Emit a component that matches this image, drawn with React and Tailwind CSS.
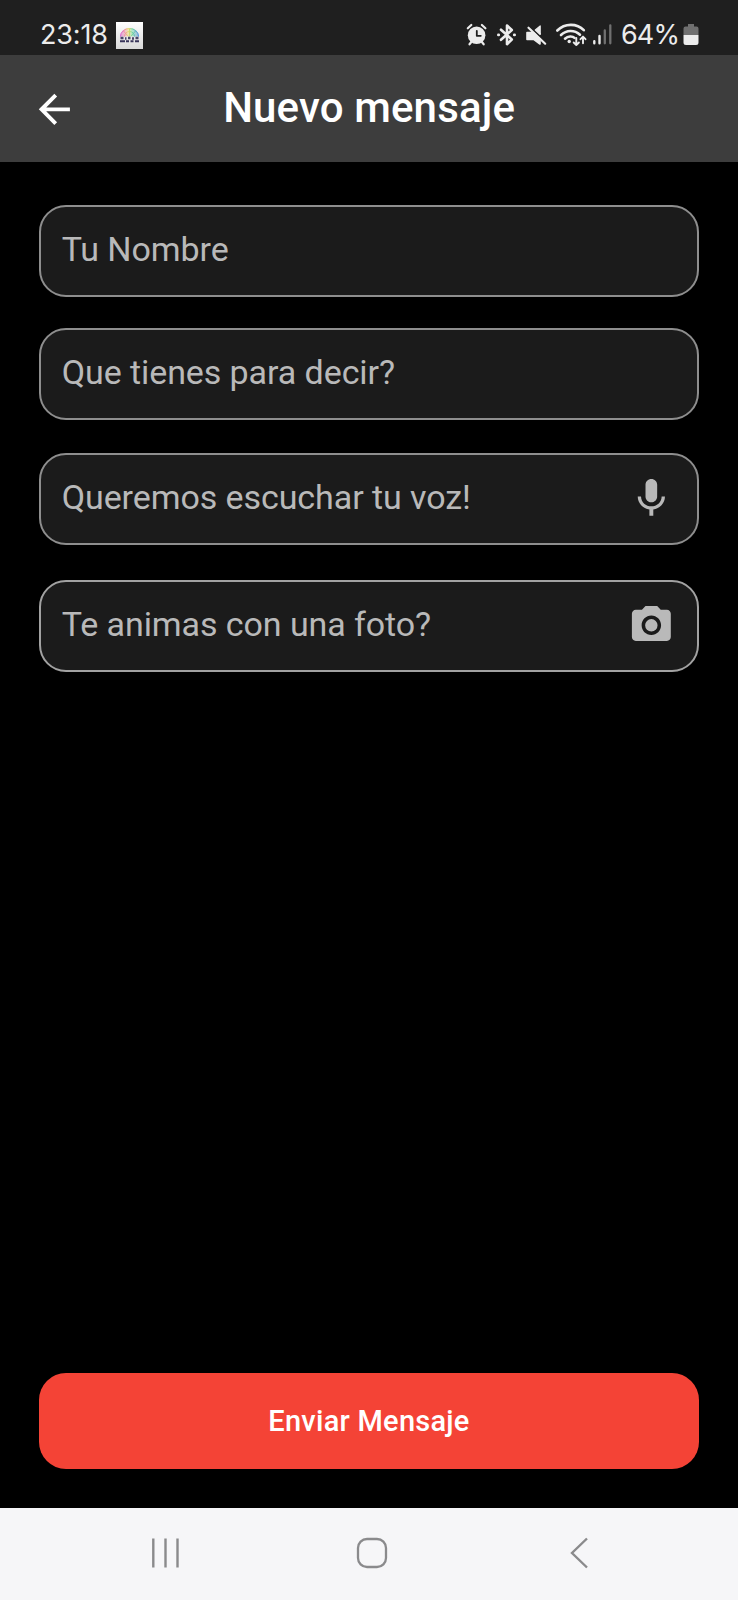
import React from 'react';

const fields = [
  { label: 'Tu Nombre', box: 'mt-[42.5px] border-[#8e8e8e]' },
  { label: 'Que tienes para decir?', box: 'mt-[31px] border-[#8e8e8e]' },
  { label: 'Queremos escuchar tu voz!', box: 'mt-[33px] border-[#8e8e8e]', icon: 'mic' },
  { label: 'Te animas con una foto?', box: 'mt-[35px] border-[#a2a2a2]', icon: 'camera' },
];

const icons = {
  back: 'M20 11H7.83l5.59-5.59L12 4l-8 8 8 8 1.41-1.41L7.83 13H20v-2z',
  mic: 'M12 14c1.66 0 2.99-1.34 2.99-3L15 5c0-1.66-1.34-3-3-3S9 3.34 9 5v6c0 1.66 1.34 3 3 3zm5.3-3c0 3-2.54 5.1-5.3 5.1S6.7 14 6.7 11H5c0 3.41 2.72 6.23 6 6.72V21h2v-3.28c3.28-.48 6-3.3 6-6.72h-1.7z',
  camera: 'M12 8.8a3.2 3.2 0 1 0 0 6.4 3.2 3.2 0 1 0 0-6.4zM9 2L7.17 4H4c-1.1 0-2 .9-2 2v12c0 1.1.9 2 2 2h16c1.1 0 2-.9 2-2V6c0-1.1-.9-2-2-2h-3.17L15 2H9zm3 15c-2.76 0-5-2.24-5-5s2.24-5 5-5 5 2.24 5 5-2.24 5-5 5z',
};

function Icon({ name, className }) {
  return (
    <svg viewBox="0 0 24 24" className={className} fill="currentColor">
      <path d={icons[name]} />
    </svg>
  );
}

function AppBadge() {
  return (
    <svg width="27" height="27" viewBox="0 0 27 27" className="ml-[8px]">
      <defs>
        <linearGradient id="paper" x1="0" y1="0" x2="0" y2="1">
          <stop offset="0" stopColor="#ffffff" />
          <stop offset="1" stopColor="#d9d9d9" />
        </linearGradient>
        <linearGradient id="rainbow" gradientUnits="userSpaceOnUse" x1="4" y1="0" x2="23" y2="0">
          <stop offset="0" stopColor="#d85ad6" />
          <stop offset="0.25" stopColor="#f08fa0" />
          <stop offset="0.45" stopColor="#e9dc6a" />
          <stop offset="0.65" stopColor="#6fd6a0" />
          <stop offset="1" stopColor="#4a86e0" />
        </linearGradient>
      </defs>
      <rect width="27" height="27" fill="url(#paper)" />
      <path d="M4 14.500a9.500 8.500 0 0 1 19 0z" fill="url(#rainbow)" opacity="0.5" />
      <path d="M4.500 14.500a9 8 0 0 1 18 0M8.500 14.500a5 5 0 0 1 10 0M13.500 6.500V14.500M7.500 9l4.500 5M19.500 9l-4.500 5" fill="none" stroke="url(#rainbow)" strokeWidth="1" />
      <path d="M4.500 16h3M9 16.500h1.500M12 16h2.500M16 16.500h2M19.500 16h3" stroke="#4a4468" strokeWidth="2.400" />
      <path d="M4 19.300h5M10 19.300h3M14.500 19.300h3M19 19.300h4" stroke="#38345a" strokeWidth="2" />
    </svg>
  );
}

function StatusIcons() {
  return (
    <svg width="148" height="26" viewBox="466 22 148 26" fill="none" stroke="#ececec" strokeLinecap="round" strokeLinejoin="round">
      {/* alarm */}
      <circle cx="476.600" cy="35.300" r="8.800" fill="#ececec" stroke="none" />
      <path d="M467.800 28.300l3.500-3.300M485.400 28.300l-3.500-3.300M471.300 42l-1.800 2.300M481.900 42l1.800 2.300" strokeWidth="2.200" />
      <path d="M476.800 30.800v5h4" stroke="#1f1f1f" strokeWidth="1.800" />
      {/* bluetooth */}
      <path d="M501 29.700l10.800 9.800-4.800 4.700V25.500l4.800 4.500-10.800 9.800" strokeWidth="2.600" />
      <path d="M498.400 34.900h.3M514.300 34.900h.3" strokeWidth="2.800" />
      {/* muted speaker */}
      <path d="M527 32.500h6.500l6.500 6.800v4.700l-6-4.500h-7z" fill="#ececec" strokeWidth="1.600" />
      <path d="M535.300 30l4.900-4v8.500z" fill="#ececec" strokeWidth="1.200" />
      <path d="M528.500 27.700l16.700 16" strokeWidth="2.200" />
      {/* wifi */}
      <path d="M557.300 30.500c7.500-7.500 19.500-7.500 26.500-.3" strokeWidth="2.600" />
      <path d="M561 35c5.500-5.300 13.500-5.300 19-.3M565 38.700c3-2.800 7.500-2.800 9.500-.8" strokeWidth="2.600" />
      <circle cx="569.200" cy="41.500" r="1.700" fill="#ececec" stroke="none" />
      <path d="M576.300 38v7M573.700 42.500l2.600 2.600 2.600-2.600M583 43.300v-6.500M580.500 39.200l2.500-2.600 2.500 2.600" strokeWidth="1.900" />
      {/* signal */}
      <path d="M594.300 41.300v2M599.500 36v7.300" strokeWidth="2.400" />
      <path d="M604.800 30.500v12.800M610.300 25.300v18" stroke="#707070" strokeWidth="2.300" />
    </svg>
  );
}

function StatusBar() {
  return (
    <div className="h-[55px] bg-[#1f1f1f] flex items-center pt-[15px] pl-[40px] pr-[39px] text-[#ececec] text-[27px] leading-[40px] font-['Inter',sans-serif]">
      <span className="w-[68px] tracking-[-0.150px] whitespace-nowrap">23:18</span>
      <AppBadge />
      <div className="flex-1" />
      <StatusIcons />
      <span className="ml-[7px] w-[57px] tracking-[-0.9px] whitespace-nowrap">64%</span>
      <svg width="16" height="22" viewBox="0 0 16 22" className="ml-[5px]">
        <path d="M5 0h6v2.500h2.500a2 2 0 0 1 2 2V11H.5V4.500a2 2 0 0 1 2-2H5z" fill="#707070" />
        <path d="M.5 11h15v7.500a2.500 2.500 0 0 1-2.500 2.500H3a2.500 2.500 0 0 1-2.500-2.500z" fill="#ececec" />
      </svg>
    </div>
  );
}

function Field({ label, box, icon }) {
  return (
    <div className={`${box} h-[92px] shrink-0 flex items-center justify-between rounded-[27px] border-2 bg-[#1b1b1b] pl-[21px] pr-[23px] text-[#b9b9b9]`}>
      <span className="pb-[4px] text-[34px] leading-[40px] tracking-[-0.080px]">{label}</span>
      {icon && <Icon name={icon} className="size-[46.700px]" />}
    </div>
  );
}

function NavBar() {
  return (
    <div className="h-[92.500px] shrink-0 bg-[#f6f6f8] flex items-center pl-[151px] pb-[2px] text-[#8a8a8c]">
      <svg width="30" height="32" viewBox="0 0 30 32" fill="none" stroke="currentColor" strokeWidth="2.400">
        <path d="M2.300 1.500v29M14.500 1.500v29M26.500 1.500v29" />
      </svg>
      <svg width="32" height="32" viewBox="0 0 32 32" className="ml-[174.500px]" fill="none" stroke="currentColor" strokeWidth="2.300">
        <rect x="2" y="2" width="28" height="28" rx="9" />
      </svg>
      <svg width="20" height="32" viewBox="0 0 20 32" className="ml-[181px]" fill="none" stroke="currentColor" strokeWidth="2.400">
        <path d="M18 1.500L3 16l15 14.500" />
      </svg>
    </div>
  );
}

export default function App() {
  return (
    <div className="w-[738px] h-[1600px] flex flex-col bg-black overflow-hidden font-['Roboto',sans-serif]">
      <StatusBar />
      <header className="h-[107px] shrink-0 bg-[#3d3d3d] flex items-center pl-[30.500px] pr-[77px] text-white">
        <Icon name="back" className="size-[46.700px] mt-[1px]" />
        <h1 className="flex-1 text-center text-[42px] leading-[50px] font-medium tracking-[0.150px] pb-[2px]">Nuevo mensaje</h1>
      </header>
      <main className="flex-1 flex flex-col px-[38.700px]">
        {fields.map((field) => (
          <Field key={field.label} {...field} />
        ))}
        <button type="button" className="mt-auto mb-[38.500px] h-[96px] rounded-[27px] bg-[#f44336] pt-[2px] text-white text-[29px] font-medium tracking-[0.250px]">
          Enviar Mensaje
        </button>
      </main>
      <NavBar />
    </div>
  );
}
